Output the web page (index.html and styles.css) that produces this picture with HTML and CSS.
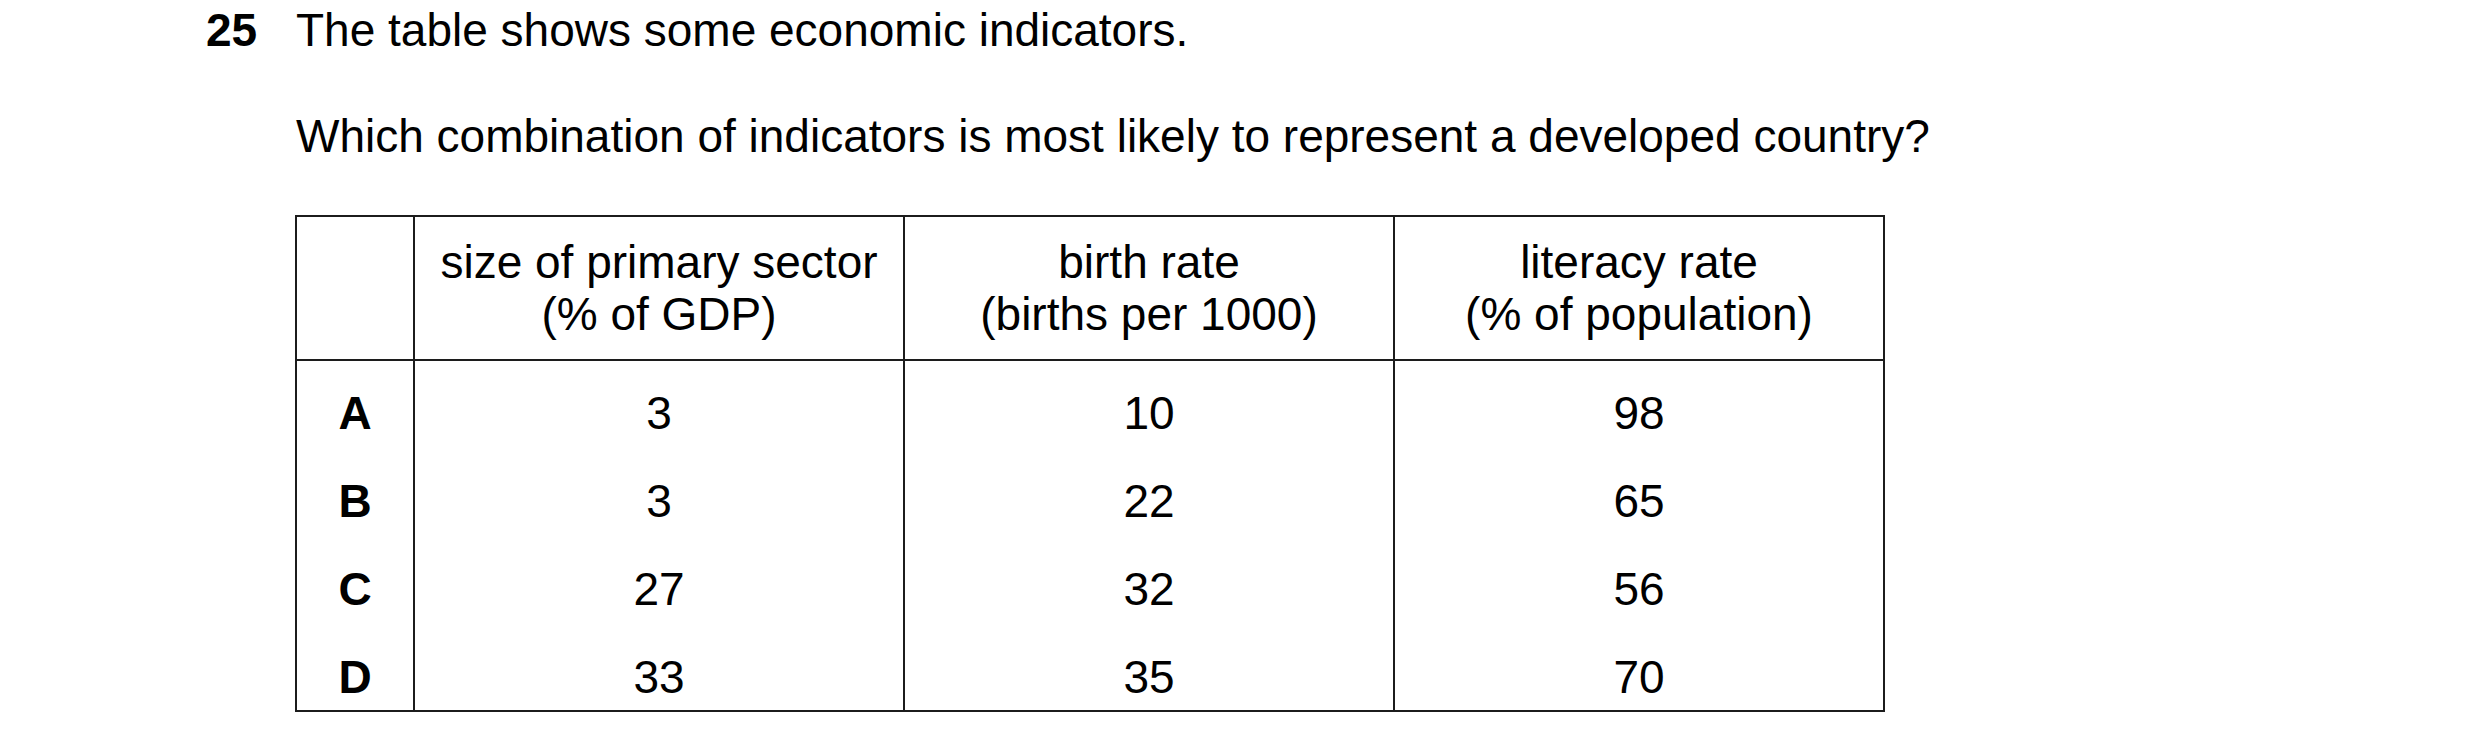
FILE: index.html
```html
<!DOCTYPE html>
<html>
<head>
<meta charset="utf-8">
<link rel="stylesheet" href="styles.css">
</head>
<body>
<div class="question">
  <div class="qnum">25</div>
  <div class="qbody">
    <p class="line1">The table shows some economic indicators.</p>
    <p class="line2">Which combination of indicators is most likely to represent a developed country?</p>
    <table class="data">
      <colgroup>
        <col class="c-key">
        <col class="c-val">
        <col class="c-val">
        <col class="c-val">
      </colgroup>
      <thead>
        <tr>
          <th></th>
          <th>size of primary sector<br>(% of GDP)</th>
          <th>birth rate<br>(births per 1000)</th>
          <th>literacy rate<br>(% of population)</th>
        </tr>
      </thead>
      <tbody>
        <tr class="first"><td class="key">A</td><td>3</td><td>10</td><td>98</td></tr>
        <tr><td class="key">B</td><td>3</td><td>22</td><td>65</td></tr>
        <tr><td class="key">C</td><td>27</td><td>32</td><td>56</td></tr>
        <tr class="last"><td class="key">D</td><td>33</td><td>35</td><td>70</td></tr>
      </tbody>
    </table>
  </div>
</div>
</body>
</html>
```
FILE: styles.css
```css
html, body {
  margin: 0;
  padding: 0;
  background: #fff;
}
body {
  font-family: "Liberation Sans", Arial, sans-serif;
  font-size: 46px;
  line-height: 52px;
  color: #000;
}
.question {
  display: flex;
  padding-top: 4px;
  padding-left: 206px;
}
.qnum {
  font-weight: bold;
  width: 90px;
  flex: none;
}
.qbody {
  display: flex;
  flex-direction: column;
}
.line1, .line2 {
  margin: 0;
  white-space: nowrap;
}
.line2 {
  margin-top: 54px;
}
.data {
  margin-top: 53px;
  width: 1590px;
  border-collapse: collapse;
  table-layout: fixed;
  margin-left: -1px;
}
.c-key { width: 118px; }
.c-val { width: 490px; }
.data th, .data td {
  border-left: 2px solid #1c1c1c;
  border-right: 2px solid #1c1c1c;
  text-align: center;
  font-weight: normal;
  padding: 18px 0;
}
.data th {
  border-top: 2px solid #1c1c1c;
  border-bottom: 2px solid #1c1c1c;
  padding: 19px 0;
  height: 104px;
}
.data td.key {
  font-weight: bold;
}
.data tr.first td {
  padding-top: 26px;
}
.data tr.last td {
  padding-bottom: 7px;
  border-bottom: 2px solid #1c1c1c;
}
```
